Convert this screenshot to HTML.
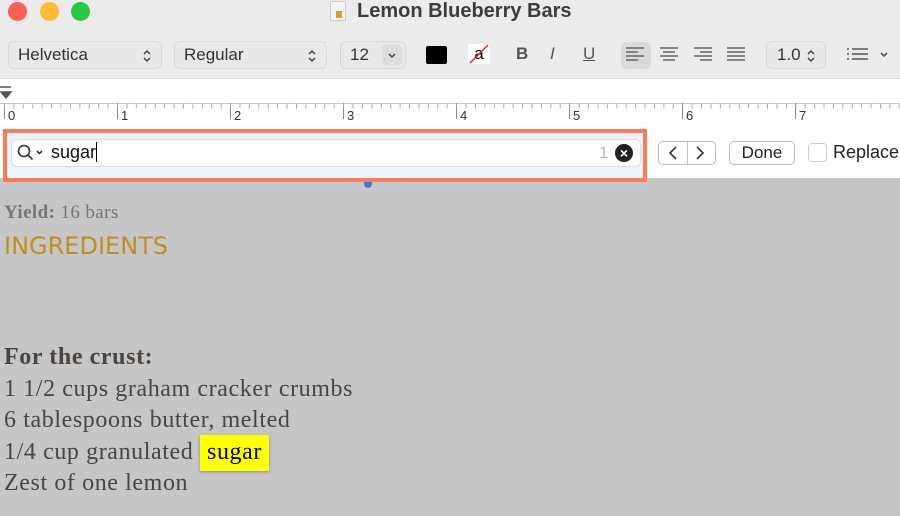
<!DOCTYPE html>
<html><head><meta charset="utf-8"><style>
*{margin:0;padding:0;box-sizing:border-box}
body{width:900px;height:516px;overflow:hidden;background:#c6c6c6;font-family:"Liberation Sans",sans-serif;position:relative}
.abs{position:absolute}
.tb{left:0;top:0;width:900px;height:78px;background:#ebebeb}
.dot{width:19px;height:19px;border-radius:50%;top:2px}
.sel{top:41px;height:28px;border:1px solid #d8d8d8;border-radius:6px;background:#e8e8e8;font-size:17px;color:#333;padding:3px 9px}
.ud{position:absolute;right:9px;top:7px}
.ruler{left:0;top:78px;width:900px;height:50px;background:#fff;border-top:1px solid #ddd}
.find{left:0;top:128px;width:900px;height:50px;background:#fff}
.txt{font-family:"Liberation Serif",serif;color:#4a4540;font-size:24px;letter-spacing:0.6px;left:4px}
</style></head><body>
<div class="abs tb"></div>
<div class="abs dot" style="left:8px;background:#fe5f57"></div>
<div class="abs dot" style="left:40px;background:#febc2e"></div>
<div class="abs dot" style="left:71px;background:#28c840"></div>
<div class="abs" style="left:330px;top:1px;width:16px;height:20px;background:#f4f4f4;border:1px solid #ccc"><div style="margin:9px 0 0 5px;width:6px;height:7px;background:#d9a030"></div></div>
<div class="abs" style="left:357px;top:0px;font-size:20px;font-weight:bold;color:#3c3c3c">Lemon Blueberry Bars</div>
<div class="abs sel" style="left:8px;width:154px">Helvetica<svg class="ud" width="10" height="14" fill="none" stroke="#444" stroke-width="1.5"><path d="M2 5l3-3 3 3M2 9l3 3 3-3"/></svg></div>
<div class="abs sel" style="left:174px;width:153px">Regular<svg class="ud" width="10" height="14" fill="none" stroke="#444" stroke-width="1.5"><path d="M2 5l3-3 3 3M2 9l3 3 3-3"/></svg></div>
<div class="abs sel" style="left:340px;width:66px">12<span style="position:absolute;right:3px;top:3px;width:20px;height:20px;background:#ddd;border-radius:4px"><svg width="20" height="20" fill="none" stroke="#444" stroke-width="1.5"><path d="M7 9l3 3 3-3"/></svg></span></div>
<div class="abs" style="left:426px;top:46px;width:21px;height:18px;background:#000;border-radius:2px"></div>
<div class="abs" style="left:468px;top:44px;width:22px;height:20px;background:#fff;font-size:17px;text-align:center;color:#000">a<svg style="position:absolute;left:0;top:0" width="22" height="20"><line x1="2" y1="19" x2="20" y2="1" stroke="#e22" stroke-width="1.5"/></svg></div>
<div class="abs" style="left:516px;top:44px;font-size:17px;font-weight:bold;color:#555">B</div>
<div class="abs" style="left:550px;top:44px;font-size:17px;font-style:italic;color:#555">I</div>
<div class="abs" style="left:583px;top:44px;font-size:17px;text-decoration:underline;color:#555">U</div>
<div class="abs" style="left:621px;top:42px;width:30px;height:27px;background:#dadada;border-radius:5px"></div>
<svg class="abs" style="left:626px;top:46px" width="120" height="18" stroke="#666" stroke-width="1.6">
<path d="M0 2h18M0 6h12M0 10h18M0 14h12"/>
<path d="M34 2h18M37 6h12M34 10h18M37 14h12"/>
<path d="M68 2h18M74 6h12M68 10h18M74 14h12"/>
<path d="M101 2h18M101 6h18M101 10h18M101 14h18"/>
</svg>
<div class="abs sel" style="left:766px;width:60px;padding-left:10px">1.0<svg class="ud" width="10" height="14" fill="none" stroke="#444" stroke-width="1.5"><path d="M2 5l3-3 3 3M2 9l3 3 3-3"/></svg></div>
<svg class="abs" style="left:846px;top:47px" width="44" height="16" stroke="#555" stroke-width="1.6"><path d="M1 2h2M1 7h2M1 12h2M6 2h16M6 7h16M6 12h16"/><path d="M35 6l3 3 3-3" fill="none"/></svg>
<div class="abs ruler"></div>
<svg class="abs" style="left:0;top:84px" width="900" height="40">
<path d="M0 3h11M1 8h10l-5 6z" fill="#555" stroke="#555" stroke-width="1.5"/>
<line x1="0" y1="19.5" x2="900" y2="19.5" stroke="#ccc"/>
<g font-size="13" fill="#333" font-family="Liberation Sans">
<text x="8" y="36">0</text><text x="121" y="36">1</text><text x="234" y="36">2</text><text x="347" y="36">3</text><text x="460" y="36">4</text><text x="573" y="36">5</text><text x="686" y="36">6</text><text x="799" y="36">7</text></g>
<path stroke="#888" d="M4.5 19v16M117.5 19v16M230.5 19v16M343.5 19v16M456.5 19v16M569.5 19v16M682.5 19v16M795.5 19v16"/>
</svg>
<svg class="abs" style="left:0;top:103px" width="900" height="6"><line x1="4" y1="3" x2="900" y2="3" stroke="#aaa" stroke-width="5" stroke-dasharray="1 8.42" stroke-dashoffset="-9.4"/></svg>
<div class="abs find"></div>
<div class="abs" style="left:3px;top:129px;width:644px;height:53px;border:4px solid #f97d55;background:#eef2fb"></div>
<div class="abs" style="left:11px;top:139px;width:630px;height:28px;background:#fff;border:1px solid #ddd;border-radius:6px"></div>
<svg class="abs" style="left:17px;top:144px" width="28" height="18" fill="none" stroke="#333" stroke-width="1.6"><circle cx="7" cy="7" r="5.5"/><path d="M11 11l4.5 4.5M20 7l2.5 2.5 2.5-2.5"/></svg>
<div class="abs" style="left:51px;top:142px;font-size:18px;color:#111">sugar<span style="display:inline-block;width:1px;height:20px;background:#000;vertical-align:-4px"></span></div>
<div class="abs" style="left:599px;top:143px;font-size:17px;color:#bbb">1</div>
<div class="abs" style="left:615px;top:144px;width:18px;height:18px;border-radius:50%;background:#222;color:#fff;font-size:14px;line-height:18px;text-align:center;font-weight:bold">×</div>
<div class="abs" style="left:658px;top:141px;width:58px;height:24px;border:1px solid #bbb;border-radius:5px;background:#fff"><div style="position:absolute;left:28px;top:0;width:1px;height:22px;background:#bbb"></div>
<svg width="58" height="22" stroke="#333" stroke-width="1.6" fill="none"><path d="M17 5l-6 6 6 6M38 5l6 6-6 6"/></svg></div>
<div class="abs" style="left:729px;top:141px;width:66px;height:24px;border:1px solid #bbb;border-radius:5px;background:#fff;font-size:17px;text-align:center;line-height:22px;color:#222">Done</div>
<div class="abs" style="left:808px;top:143px;width:19px;height:19px;border:1px solid #ccc;border-radius:4px;background:#fff"></div>
<div class="abs" style="left:833px;top:142px;font-size:18px;color:#222">Replace</div>
<div class="abs" style="left:0;top:182px;width:650px;height:8px;background:#c3c7cf"></div>
<div class="abs" style="left:364px;top:182px;width:8px;height:6px;border-radius:0 0 5px 5px;background:#4a76c8"></div>
<div class="abs txt" style="top:202px;font-size:19px;letter-spacing:0.4px;color:#7a7570"><b>Yield:</b> 16 bars</div>
<div class="abs" style="left:4px;top:232px;font-size:24px;color:#bb9020;font-family:'DejaVu Sans',sans-serif">INGREDIENTS</div>
<div class="abs txt" style="top:344px;font-weight:bold">For the crust:</div>
<div class="abs txt" style="top:376px">1 1/2 cups graham cracker crumbs</div>
<div class="abs txt" style="top:407px">6 tablespoons butter, melted</div>
<div class="abs txt" style="top:439px">1/4 cup granulated <span style="position:relative;z-index:1;background:#ffff00;color:#000;padding:4px 7px 6px 7px;box-shadow:0 1px 3px rgba(0,0,0,.3)">sugar</span></div>
<div class="abs txt" style="top:470px">Zest of one lemon</div>
</body></html>
